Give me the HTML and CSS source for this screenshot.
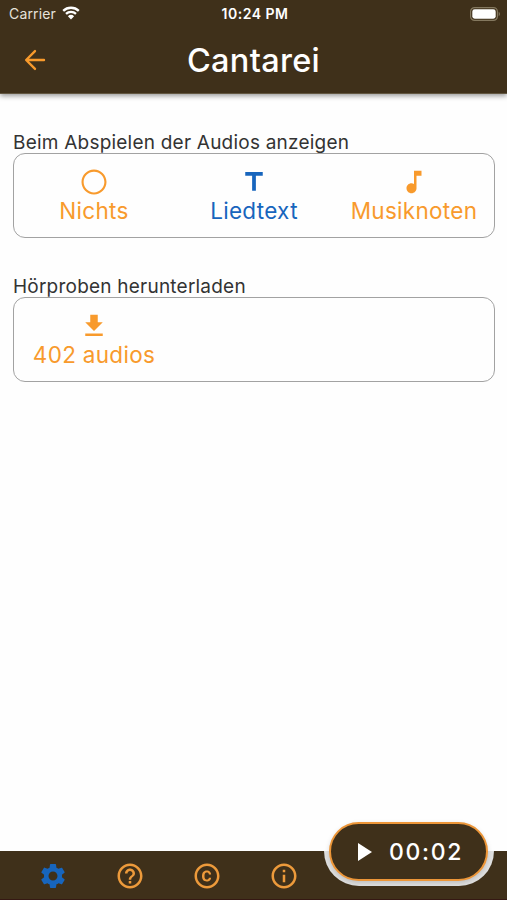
FILE: index.html
```html
<!DOCTYPE html>
<html lang="de">
<head>
  <meta charset="UTF-8">
  <meta name="viewport" content="width=device-width, initial-scale=1.0">
  <title>Cantarei</title>
  <link rel="stylesheet" href="styles.css">
</head>
<body>
  <header class="header">
    <div class="status-bar">
      <div class="carrier">
        <span>Carrier</span>
        <svg class="wifi" viewBox="0 0 18 14">
          <path d="M1.2 4.9a11.2 11.2 0 0 1 15.6 0M4 7.9a7.2 7.2 0 0 1 10 0" fill="none" stroke="#fff" stroke-width="2.3"/>
          <path d="M9 13.4L5.9 10.2a4.5 4.5 0 0 1 6.2 0z" fill="#fff"/>
        </svg>
      </div>
      <div class="clock">10:24 PM</div>
      <svg class="battery" viewBox="0 0 31 14">
        <rect x=".6" y=".6" width="26.8" height="12.8" rx="4" fill="none" stroke="#84785f" stroke-width="1.2"/>
        <rect x="2.3" y="2.3" width="23.4" height="9.4" rx="2.4" fill="#fff"/>
        <path d="M28.7 4.8a2.6 2.6 0 0 1 0 4.4z" fill="#84785f"/>
      </svg>
    </div>
    <div class="toolbar">
      <svg class="icon back" viewBox="0 0 24 24">
        <path d="M19.2 12H5.3M12 4.9L4.9 12l7.1 7.1" fill="none" stroke="currentColor" stroke-width="1.9" stroke-linecap="round" stroke-linejoin="round"/>
      </svg>
      <h1 class="title">Cantarei</h1>
    </div>
  </header>

  <main class="content">
    <h2 class="label">Beim Abspielen der Audios anzeigen</h2>
    <div class="box">
      <div class="option">
        <svg class="icon" viewBox="0 0 24 24"><path d="M12 2C6.48 2 2 6.48 2 12s4.48 10 10 10 10-4.48 10-10S17.52 2 12 2zm0 18.3c-4.6 0-8.3-3.7-8.3-8.3s3.7-8.3 8.3-8.3 8.3 3.7 8.3 8.3-3.7 8.3-8.3 8.3z"/></svg>
        <span>Nichts</span>
      </div>
      <div class="option active">
        <svg class="icon" viewBox="0 0 24 24"><path d="M5 4v3h5.5v12h3V7H19V4z"/></svg>
        <span>Liedtext</span>
      </div>
      <div class="option">
        <svg class="icon" viewBox="0 0 24 24"><path d="M12 3v10.55c-.59-.34-1.27-.55-2-.55-2.21 0-4 1.79-4 4s1.79 4 4 4 4-1.79 4-4V7h4V3h-6z"/></svg>
        <span>Musiknoten</span>
      </div>
    </div>

    <h2 class="label">Hörproben herunterladen</h2>
    <div class="box">
      <div class="option">
        <svg class="icon" viewBox="0 0 24 24"><path d="M19 9h-4V3H9v6H5l7 7 7-7zM5 18v2h14v-2H5z"/></svg>
        <span>402 audios</span>
      </div>
    </div>
  </main>

  <footer class="footer">
    <nav class="tabs">
      <svg class="icon active" viewBox="0 0 24 24"><path d="M19.14 12.94c.04-.3.06-.61.06-.94 0-.32-.02-.64-.07-.94l2.03-1.58c.18-.14.23-.41.12-.61l-1.92-3.32c-.12-.22-.37-.29-.59-.22l-2.39.96c-.5-.38-1.03-.7-1.62-.94l-.36-2.54c-.04-.24-.24-.41-.48-.41h-3.84c-.24 0-.43.17-.47.41l-.36 2.54c-.59.24-1.13.57-1.62.94l-2.39-.96c-.22-.08-.47 0-.59.22L2.74 8.87c-.12.21-.08.47.12.61l2.03 1.58c-.05.3-.09.63-.09.94s.02.64.07.94l-2.03 1.58c-.18.14-.23.41-.12.61l1.92 3.32c.12.22.37.29.59.22l2.39-.96c.5.38 1.03.7 1.62.94l.36 2.54c.05.24.24.41.48.41h3.84c.24 0 .44-.17.47-.41l.36-2.54c.59-.24 1.13-.56 1.62-.94l2.39.96c.22.08.47 0 .59-.22l1.92-3.32c.12-.22.07-.47-.12-.61l-2.01-1.58zM12 15.6c-1.98 0-3.6-1.62-3.6-3.6s1.62-3.6 3.6-3.6 3.6 1.62 3.6 3.6-1.62 3.6-3.6 3.6z"/></svg>
      <svg class="icon" viewBox="0 0 24 24"><path d="M11 18h2v-2h-2v2zm1-16C6.48 2 2 6.48 2 12s4.48 10 10 10 10-4.48 10-10S17.52 2 12 2zm0 18c-4.41 0-8-3.59-8-8s3.59-8 8-8 8 3.59 8 8-3.59 8-8 8zm0-14c-2.21 0-4 1.79-4 4h2c0-1.1.9-2 2-2s2 .9 2 2c0 2-3 1.75-3 5h2c0-2.25 3-2.5 3-5 0-2.21-1.79-4-4-4z"/></svg>
      <svg class="icon" viewBox="0 0 24 24"><path d="M10.08 10.86c.05-.33.16-.62.3-.87s.34-.46.59-.62c.24-.15.54-.22.91-.23.23.01.44.05.63.13.2.09.38.21.52.36s.25.33.34.53.13.42.14.64h1.79c-.02-.47-.11-.9-.28-1.29s-.4-.73-.7-1.01-.66-.5-1.08-.66-.88-.23-1.39-.23c-.65 0-1.22.11-1.7.34s-.88.53-1.2.92-.56.84-.71 1.36S8 11.29 8 11.87v.27c0 .58.08 1.12.23 1.64s.39.97.71 1.35.72.69 1.2.91c.48.22 1.05.34 1.7.34.47 0 .91-.08 1.32-.23s.77-.36 1.08-.63.56-.58.74-.94.29-.74.3-1.15h-1.79c-.01.21-.06.4-.15.58s-.21.33-.36.46-.32.23-.52.3c-.19.07-.39.09-.6.1-.36-.01-.66-.08-.89-.23-.25-.16-.45-.37-.59-.62s-.25-.55-.3-.88-.08-.67-.08-1v-.27c0-.35.03-.68.08-1.01zM12 2C6.48 2 2 6.48 2 12s4.48 10 10 10 10-4.48 10-10S17.52 2 12 2zm0 18c-4.41 0-8-3.59-8-8s3.59-8 8-8 8 3.59 8 8-3.59 8-8 8z"/></svg>
      <svg class="icon" viewBox="0 0 24 24"><path d="M11 7h2v2h-2zm0 4h2v6h-2zm1-9C6.48 2 2 6.48 2 12s4.48 10 10 10 10-4.48 10-10S17.52 2 12 2zm0 18c-4.41 0-8-3.59-8-8s3.59-8 8-8 8 3.59 8 8-3.59 8-8 8z"/></svg>
    </nav>
    <!-- cut-out in the bar behind the player -->
    <div class="notch"><div class="notch-shape"></div></div>
    <button class="player">
      <svg class="play" viewBox="0 0 14 18"><path d="M0 0v18l14-9z" fill="#fff"/></svg>
      <span class="time">00:02</span>
    </button>
  </footer>
</body>
</html>
```
FILE: styles.css
```css
* {
  box-sizing: border-box;
}

body {
  margin: 0;
  height: 100vh;
  display: flex;
  flex-direction: column;
  overflow: hidden;
  background-color: #fefefe;
  font-family: Inter, sans-serif;
  color: #333;
}

.icon {
  display: block;
  width: 30px;
  height: 30px;
  fill: currentColor;
}

.header {
  height: 94px;
  flex: none;
  background-color: #3f301a;
  border-bottom: 1px solid #625640;
  box-shadow: 0 2px 5px rgba(0, 0, 0, 0.4);
  color: white;
}

.status-bar {
  height: 27px;
  display: grid;
  grid-template-columns: 1fr auto 1fr;
  align-items: center;
  padding: 0 6px 0 9px;
}

.carrier {
  display: flex;
  align-items: center;
  gap: 6px;
  font-size: 14px;
  letter-spacing: 0.15px;
  color: #e6e2da;
}

.wifi {
  width: 18px;
  height: 14px;
  margin-top: -2px;
}

.clock {
  font-size: 14px;
  font-weight: 600;
  letter-spacing: 0.5px;
}

.battery {
  width: 31px;
  height: 14px;
  justify-self: end;
}

.toolbar {
  height: 66px;
  display: grid;
  grid-template-columns: 70px 1fr 70px;
  align-items: center;
}

.back {
  margin-left: 20px;
  color: #f89a2c;
}

.title {
  margin: 0;
  text-align: center;
  font-size: 32.5px;
  font-weight: 500;
  letter-spacing: 0.3px;
}

.content {
  flex: 1;
  padding: 36px 12px 0 13px;
}

.label {
  height: 23px;
  margin: 0;
  font-size: 19px;
  line-height: 25px;
  font-weight: 400;
  letter-spacing: 0.22px;
  white-space: nowrap;
}

.box {
  height: 85px;
  display: grid;
  grid-template-columns: repeat(3, 1fr);
  border: 1px solid #a2a2a2;
  border-radius: 12px;
  margin-bottom: 36px;
}

.option {
  display: flex;
  flex-direction: column;
  align-items: center;
  padding-top: 12.5px;
  font-size: 22.5px;
  line-height: 27px;
  letter-spacing: 0.3px;
  color: #f89a2c;
}

.option.active,
.tabs .active {
  color: #1765bd;
}

.footer {
  position: relative;
  height: 49px;
  flex: none;
  background-color: #3f301a;
  border-bottom: 1px solid #351813;
  color: #ed9a3b;
}

.tabs {
  width: 307px;
  height: 49px;
  margin-left: 15px;
  display: grid;
  grid-template-columns: repeat(4, 1fr);
  align-items: center;
  justify-items: center;
}

.notch {
  position: absolute;
  top: 0;
  right: 13px;
  width: 170px;
  height: 35px;
  overflow: hidden;
}

.notch-shape {
  height: 70px;
  margin-top: -35px;
  border-radius: 35px;
  background-color: #e0e0e0;
}

.player {
  position: absolute;
  right: 19px;
  bottom: 18px;
  width: 159px;
  height: 59px;
  display: flex;
  align-items: center;
  padding: 0 0 0 27px;
  gap: 17px;
  border: 2px solid #ed9638;
  border-radius: 30px;
  background-color: #3f301a;
  box-shadow: 0 2px 5px rgba(0, 0, 0, 0.15);
  color: white;
  font-family: inherit;
}

.play {
  width: 14px;
  height: 18px;
}

.time {
  font-size: 23px;
  font-weight: 500;
  letter-spacing: 1.7px;
}
```
